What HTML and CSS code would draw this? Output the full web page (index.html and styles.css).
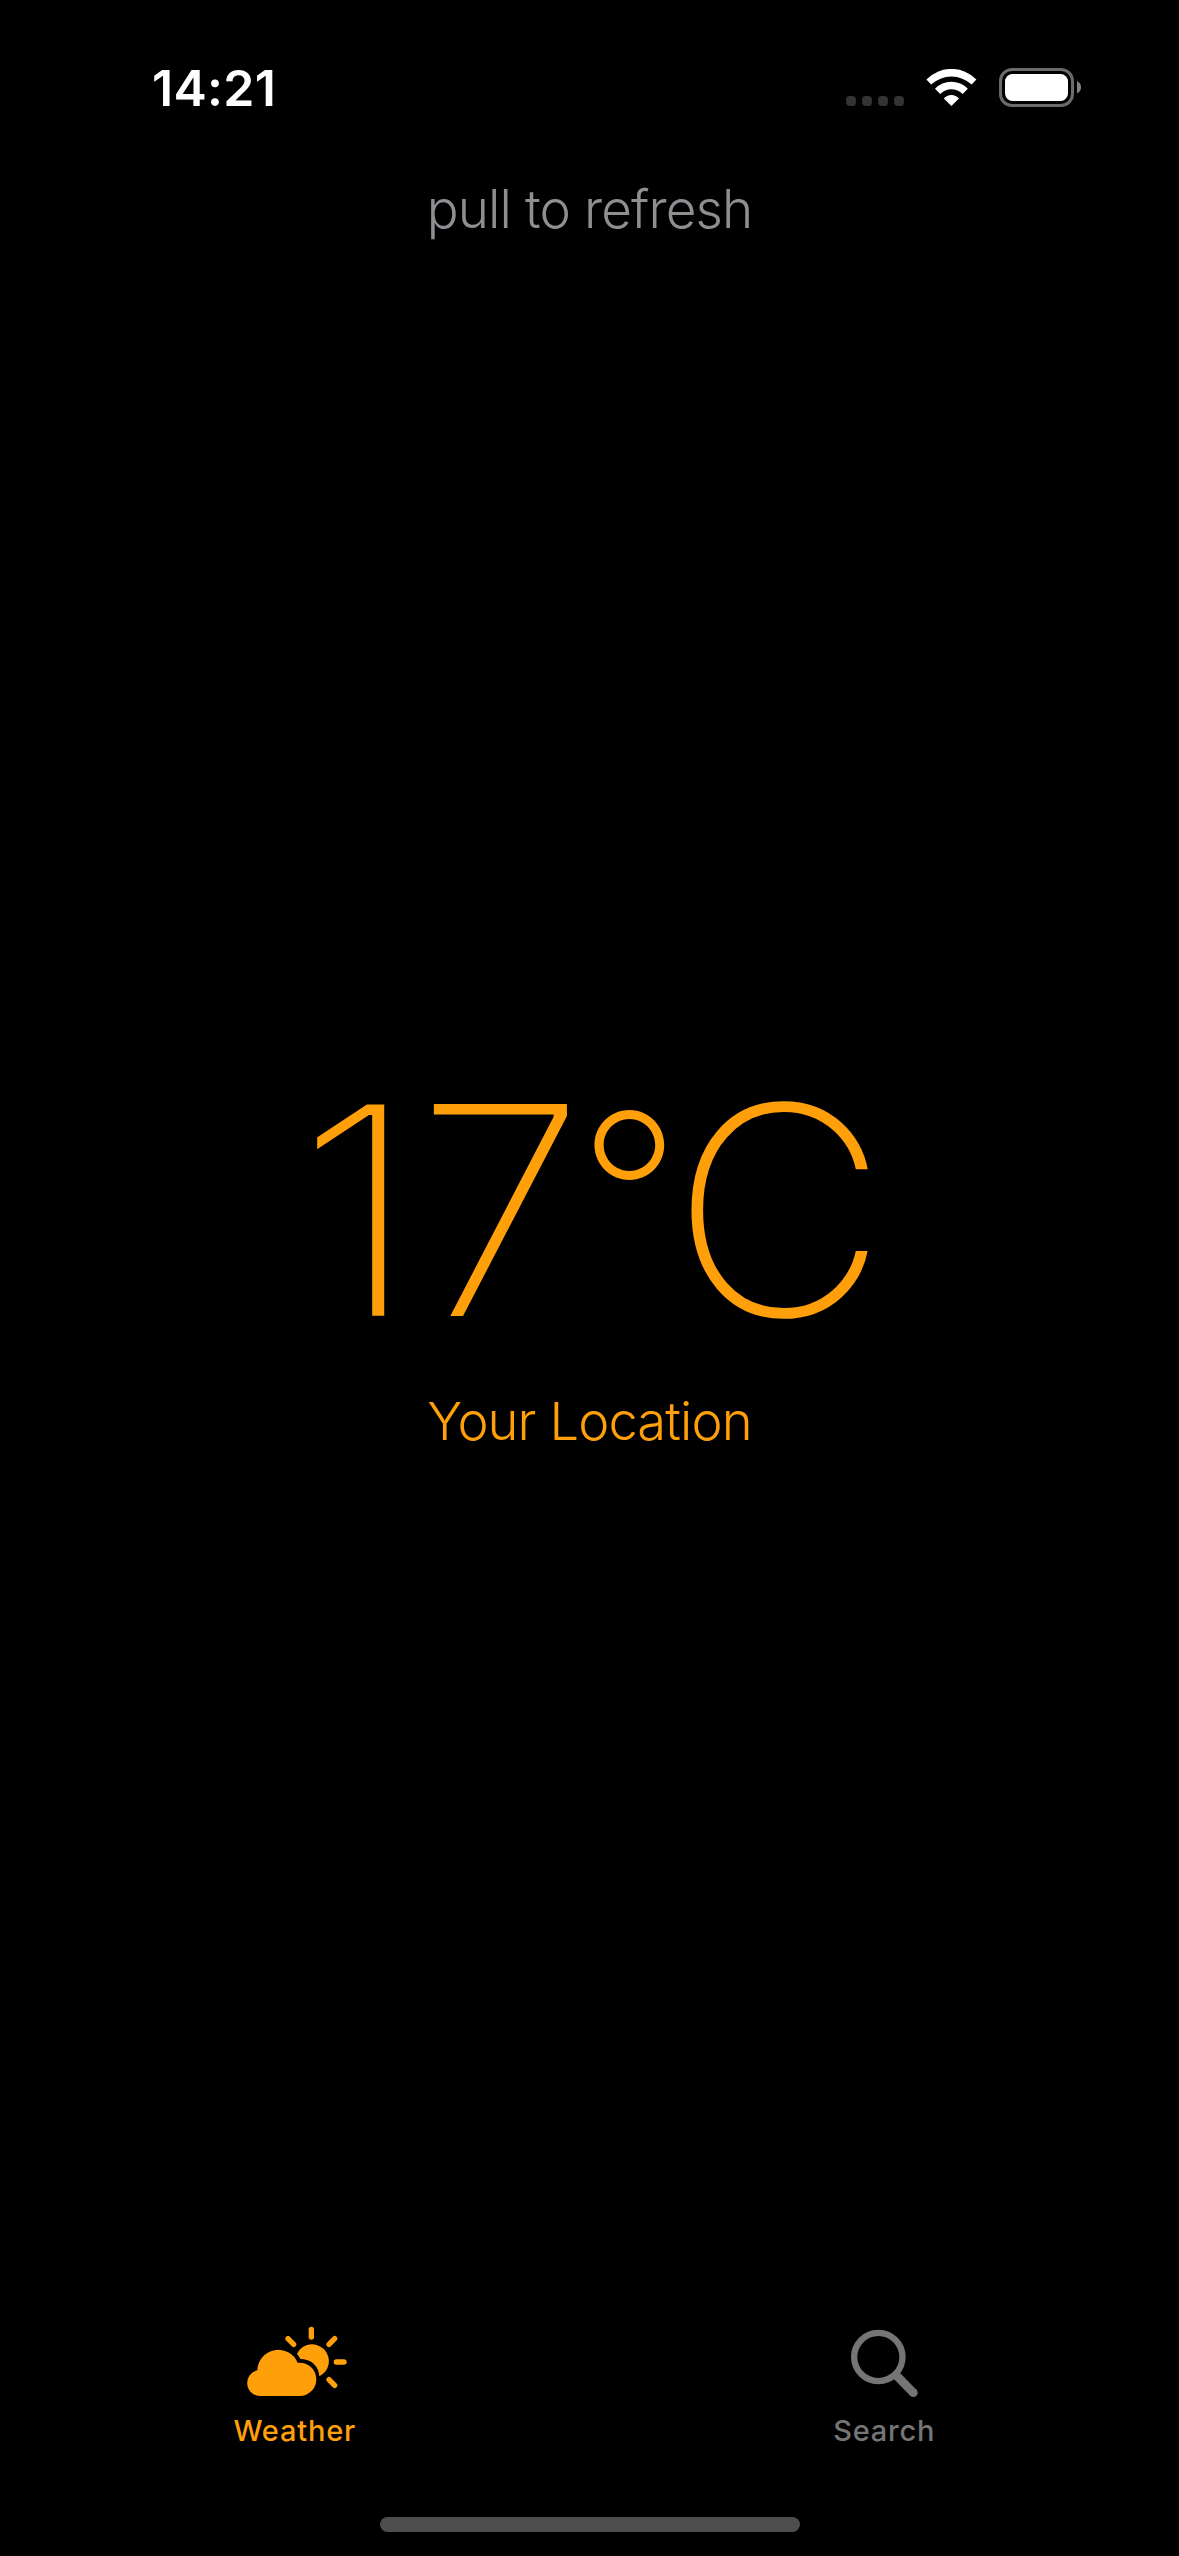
FILE: index.html
```html
<!DOCTYPE html>
<html lang="en">
<head>
<meta charset="utf-8">
<title>Weather</title>
<link rel="stylesheet" href="styles.css">
</head>
<body>
<div class="screen">
  <header class="status">
    <div class="time">14:21</div>
    <div class="indicators">
      <svg class="dots" width="58" height="10" viewBox="0 0 58 10"><rect width="10" height="10" rx="4"/><rect x="16" width="10" height="10" rx="4"/><rect x="32" width="10" height="10" rx="4"/><rect x="48" width="10" height="10" rx="4"/></svg>
      <svg class="wifi" width="51" height="37" viewBox="0 0 51 37"><path d="M.4 10.4A35 35 0 0 1 50.4 10.4L45.7 15.5A30 30 0 0 0 5.1 15.5ZM9 19.7A22.6 22.6 0 0 1 41.8 19.7L36.6 25A15.5 15.5 0 0 0 14.2 25ZM17.8 29.6A10 10 0 0 1 33 29.6L25.4 37Z"/></svg>
      <svg class="battery" width="82" height="39" viewBox="0 0 82 39"><rect x="1.5" y="1.5" width="72" height="36" rx="11.5" fill="none" stroke="#6b6b6b" stroke-width="3"/><rect x="6" y="6" width="63" height="27" rx="7.5" fill="#fff"/><path d="M78 13Q82 15 82 19.2T78 25.4Z" fill="#828282"/></svg>
    </div>
  </header>
  <p class="hint">pull to refresh</p>
  <main class="weather">
    <h1 class="temperature"><span class="one">1</span><span class="seven">7</span><span class="degree">°</span><span class="unit">C</span></h1>
    <p class="place">Your Location</p>
  </main>
  <nav class="tabs">
    <a class="tab active">
      <span class="icon"><svg class="cloud-sun" width="101" height="71" viewBox="78 48 303 213">
        <path fill="currentColor" d="M119 258H239A50 50 0 0 0 239 158L233 158A63 63 0 0 0 112 181A39 39 0 0 0 119 258Z"/>
        <path fill="currentColor" d="M231 131A50.5 50.5 0 1 1 298 199Q297 177 281 161Q264 147 241 147Q237 138 231 131Z"/>
        <path fill="none" stroke="currentColor" stroke-width="16" stroke-linecap="round" d="M274 58V81M349 156H372M327 103L344 86M204 86L221 103M327 209L344 226"/>
      </svg></span>
      <span class="label">Weather</span>
    </a>
    <a class="tab">
      <span class="icon"><svg class="magnifier" width="69" height="69" viewBox="90 57 207 207" fill="none" stroke="currentColor">
        <circle cx="175" cy="141" r="72.5" stroke-width="19"/>
        <path d="M228 195L280 248" stroke-width="26"/>
        <circle cx="280" cy="248" r="13" fill="currentColor" stroke="none"/>
      </svg></span>
      <span class="label">Search</span>
    </a>
  </nav>
  <div class="home-bar"></div>
</div>
</body>
</html>
```
FILE: styles.css
```css
* { box-sizing: border-box; }
body { margin: 0; background: #000; font-family: Inter, sans-serif; }
svg { display: block; }
.screen { display: flex; flex-direction: column; width: 1179px; height: 2556px; }
.status { display: flex; justify-content: space-between; height: 176px; padding: 55px 98px 0 152px; color: #fff; }
.time { font-size: 50px; line-height: 66px; font-weight: 600; letter-spacing: 0.3px; }
.indicators { display: flex; align-items: flex-end; gap: 22px; height: 39px; margin-top: 13px; }
.dots { fill: #333; margin-bottom: 1px; }
.wifi { fill: #fff; margin-bottom: 1px; }
.hint, .place { margin: 0; text-align: center; font-weight: 300; line-height: 66px; }
.hint { color: #8e8e93; font-size: 53px; letter-spacing: -0.9px; }
.weather { margin-top: 798px; color: #ff9f0a; }
.temperature { display: flex; justify-content: center; align-items: baseline; height: 340px; margin: 0; font-size: 294px; font-weight: 200; line-height: 340px; }
/* The black outline thins the strokes to a weight between thin and extra-light. */
.one, .seven, .unit { -webkit-text-stroke: 2px #000; transform-origin: left; }
.one { margin: 0 8px 0 -1px; transform: scaleX(1.12); -webkit-text-stroke-width: 2.6px; }
.seven { margin-right: 0.5px; transform: scaleX(1.05); }
.degree { font-size: 227px; letter-spacing: -11px; transform: translateY(-40px); }
.unit { transform: scaleX(1.025); }
.place { margin-top: 8px; font-size: 52.5px; letter-spacing: -0.9px; }
.tabs { display: flex; margin-top: auto; }
.tab { display: flex; flex: 1; flex-direction: column; align-items: center; color: #757575; }
.tab.active { color: #ff9f0a; }
.icon { height: 87px; }
.cloud-sun { margin-left: 3px; }
.magnifier { margin-top: 3px; }
.label { font-size: 29px; font-weight: 500; line-height: 36px; letter-spacing: 0.8px; }
.home-bar { width: 420px; height: 15px; margin: 68px auto 24px; border-radius: 8px; background: #4d4d4d; }
```
